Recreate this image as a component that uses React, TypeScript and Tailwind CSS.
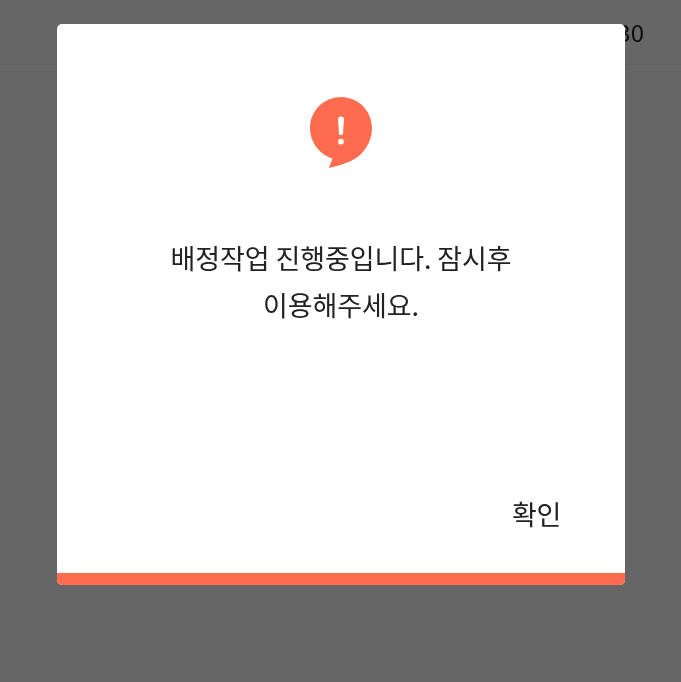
import React from "react";

const font = "font-['Noto_Sans_CJK_KR','Noto_Sans',sans-serif]";

function AlertIcon() {
  return (
    <svg width="62" height="72" viewBox="0 0 62 72" className="block">
      <path
        d="M31 0C48.1 0 62 13.9 62 31C62 41 57.5 51 50 58C42 65 31 68 19 71L22.5 61.5C9.5 57.5 0 45.2 0 31C0 13.9 13.9 0 31 0Z"
        fill="#FF6B4F"
      />
      <path d="M28 22C28 20.4 29.3 19.5 31 19.5C32.7 19.5 34 20.4 34 22L33 36.8C32.9 37.9 32.1 38.2 31 38.2C29.9 38.2 29.1 37.9 29 36.8Z" fill="#fff" />
      <circle cx="31" cy="44.7" r="2.9" fill="#fff" />
    </svg>
  );
}

export default function App() {
  return (
    <div className={`relative h-[682px] w-[681px] overflow-hidden bg-white ${font}`}>
      {/* page behind the dialog */}
      <div className="flex h-[65px] items-center justify-end border-b border-[#f0f0f0] pr-[37px]">
        <span className="text-[24px] text-[#222]">30</span>
      </div>

      <div className="absolute inset-0 bg-[#666666] mix-blend-multiply" />

      <div className="absolute inset-0 pl-[57px] pt-[24px]">
        <div className="flex h-[561px] w-[568px] flex-col overflow-hidden rounded-[5px] bg-white">
          <div className="flex flex-1 flex-col items-center pt-[73px]">
            <AlertIcon />
            <p className="mt-[65px] text-center text-[27px] leading-[47px] tracking-[-0.08px] text-[#222]">
              배정작업 진행중입니다. 잠시후
              <br />
              이용해주세요.
            </p>
          </div>
          <div className="flex justify-end pr-[64px] pb-[36px]">
            <button className="text-[27px] leading-[47px] tracking-[-0.4px] text-[#222]">확인</button>
          </div>
          <div className="h-[12px] bg-[#FF6B4F]" />
        </div>
      </div>
    </div>
  );
}
